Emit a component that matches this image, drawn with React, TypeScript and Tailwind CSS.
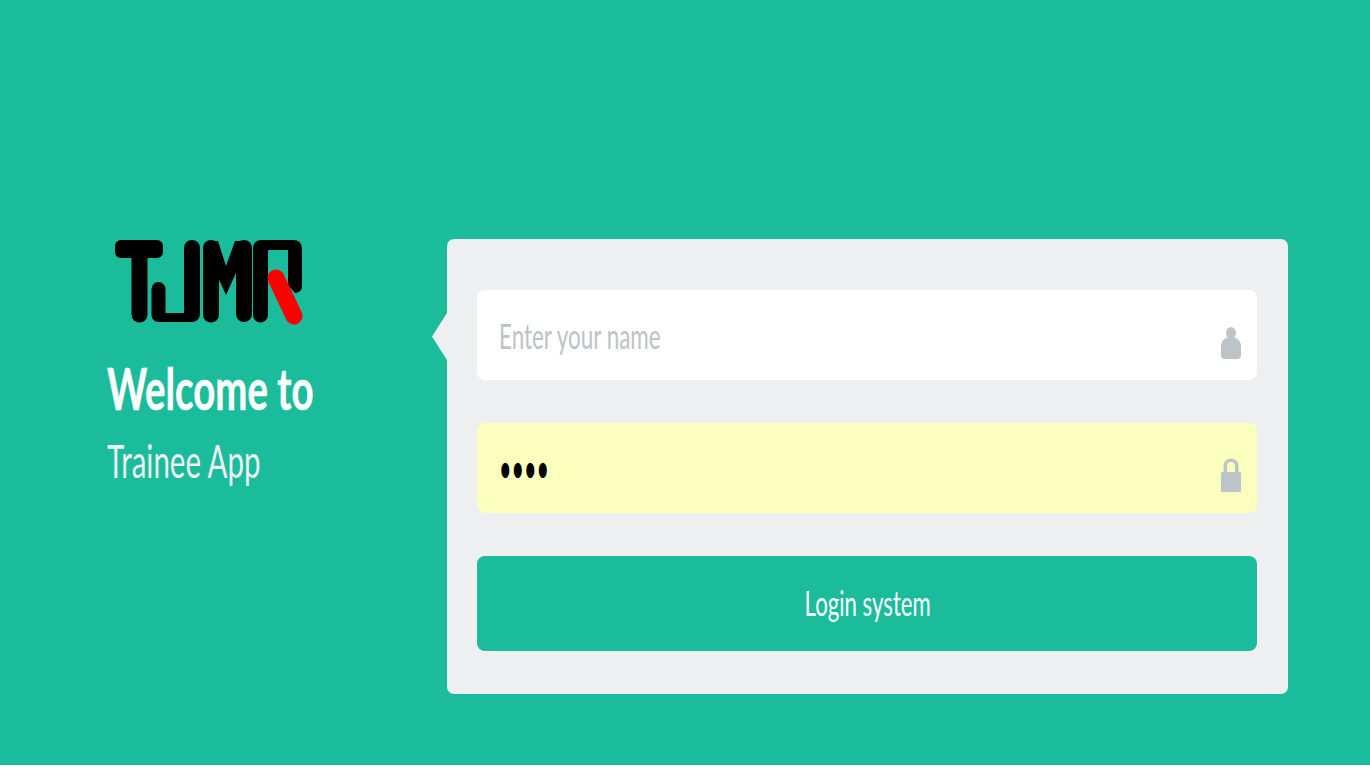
/**
 * Login screen: logo + welcome text on the left, form card on the right.
 * The reference is stretched vertically, so text gets a scale-x to match.
 */
function Logo() {
  return (
    <svg width="190" height="86" viewBox="0 0 190 86" className="block" aria-label="TJMR logo">
      {/* T */}
      <rect x="0" y="0" width="48" height="18" rx="6" fill="#000" />
      <path d="M24.500 6v68.500" stroke="#000" strokeWidth="16" strokeLinecap="round" />
      {/* J */}
      <path d="M43.500 49v26" stroke="#000" strokeWidth="14" strokeLinecap="round" />
      <rect x="43" y="73" width="34" height="9" fill="#000" />
      <path d="M77 8v66" stroke="#000" strokeWidth="16" strokeLinecap="round" />
      {/* M */}
      <path d="M96 8v66.500" stroke="#000" strokeWidth="16" strokeLinecap="round" />
      <path d="M129 8v66" stroke="#000" strokeWidth="16" strokeLinecap="round" />
      <path d="M96 1h7l8 25 9-25h6v21L111 55 96 22Z" fill="#000" />
      {/* R */}
      <path
        d="M138 9Q138 0 147 0H178Q187 0 187 9V46Q187 52 180 53L173 45V10H153V75a7.500 7.500 0 0 1-15 0Z"
        fill="#000"
      />
      <path d="M161 38 179 76" fill="none" stroke="#ff0000" strokeLinecap="round" strokeWidth="17" />
    </svg>
  );
}

function UserIcon() {
  return (
    <svg width="22" height="34" viewBox="0 0 22 34" className="block" fill="#bdc3c7">
      <ellipse cx="11" cy="7" rx="5" ry="6" />
      <path d="M1 29V20C1 15 5 12 8 11.500h6C17 12 21 15 21 20v9q0 4-4 4H5q-4 0-4-4Z" />
    </svg>
  );
}

function LockIcon() {
  return (
    <svg width="22" height="36" viewBox="0 0 22 36" className="block" fill="#bdc3c7">
      <path d="M3.500 16V9a7.500 7.500 0 0 1 15 0v7H15V9a4 4 0 0 0-8 0v7Z" />
      <rect x="1" y="15" width="20" height="20" rx="1.500" />
    </svg>
  );
}

export default function App() {
  return (
    <div className="bg-white h-[770px] font-['Lato','Noto_Sans',sans-serif]">
      <div className="h-[765px] bg-[#1abc9c] flex border-b border-[#12b795] pt-[239px] overflow-hidden">
        <div className="w-[447px] shrink-0 pl-[107px]">
          <div className="ml-[8px] mt-[1px]">
            <Logo />
          </div>
          <h1 className="mt-[27px] text-[58px] leading-[70px] font-bold text-white [-webkit-text-stroke:0.5px_white] whitespace-nowrap origin-left scale-x-[0.662]">
            Welcome to
          </h1>
          <p className="mt-[10px] text-[46px] leading-[56px] font-normal text-[#ecf0f1] whitespace-nowrap origin-left scale-x-[0.641]">
            Trainee App
          </p>
        </div>

        <div className="relative w-[841px] h-[455px] bg-[#eeeff1] rounded-[7px] pl-[30px] pr-[31px] pt-[51px]">
          <div className="absolute left-[-15px] top-[74px] w-[15px] h-[47px] bg-[#eeeff1] [clip-path:polygon(100%_0,0_50%,100%_100%)]" />

          <div className="h-[90px] bg-white rounded-[8px] flex items-center justify-between pl-[22px] pr-[15px]">
            <span className="text-[34px] text-[#bdc3c7] whitespace-nowrap origin-left scale-x-[0.66]">Enter your name</span>
            <span className="mt-[16px]"><UserIcon /></span>
          </div>

          <div className="mt-[43px] h-[90px] bg-[#faffbd] rounded-[8px] flex items-center justify-between pl-[22px] pr-[15px]">
            <span className="text-[40px] leading-none text-black whitespace-nowrap origin-left scale-x-[0.54]">••••</span>
            <span className="mt-[14px]"><LockIcon /></span>
          </div>

          <div className="mt-[43px] pb-[2px] pl-[2px] h-[95px] bg-[#1abc9c] rounded-[8px] flex items-center justify-center">
            <span className="text-[34px] text-white whitespace-nowrap scale-x-[0.653]">Login system</span>
          </div>
        </div>
      </div>
    </div>
  );
}
